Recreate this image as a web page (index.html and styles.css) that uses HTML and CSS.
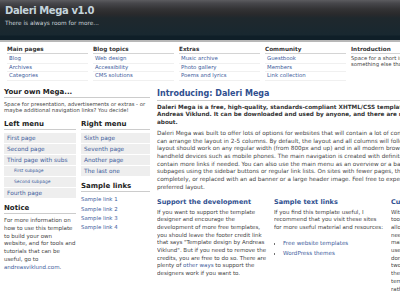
FILE: index.html
```html
<!DOCTYPE html>
<html lang="en">
<head>
    <meta charset="UTF-8">
    <title>Daleri Mega v1.0</title>
    <link rel="stylesheet" href="styles.css">
</head>
<body>
<div class="page">
    <header class="top">
        <h1 class="site-title">Daleri Mega v1.0</h1>
        <p class="site-slogan">There is always room for more...</p>
    </header>

    <nav class="menus">
        <dl class="menu">
            <dt>Main pages</dt>
            <dd><a href="#">Blog</a></dd>
            <dd><a href="#">Archives</a></dd>
            <dd><a href="#">Categories</a></dd>
        </dl>
        <dl class="menu">
            <dt>Blog topics</dt>
            <dd><a href="#">Web design</a></dd>
            <dd><a href="#">Accessibility</a></dd>
            <dd><a href="#">CMS solutions</a></dd>
        </dl>
        <dl class="menu">
            <dt>Extras</dt>
            <dd><a href="#">Music archive</a></dd>
            <dd><a href="#">Photo gallery</a></dd>
            <dd><a href="#">Poems and lyrics</a></dd>
        </dl>
        <dl class="menu">
            <dt>Community</dt>
            <dd><a href="#">Guestbook</a></dd>
            <dd><a href="#">Members</a></dd>
            <dd><a href="#">Link collection</a></dd>
        </dl>
        <div class="menu intro">
            <h3>Introduction</h3>
            <p>Space for a short introduction text, or<br>something else that you want to show.</p>
        </div>
    </nav>

    <div class="wrap">
        <aside class="side">
            <h2 class="side-title">Your own Mega...</h2>
            <p class="side-text">Space for presentation, advertisements or extras - or maybe additional navigation links? You decide!</p>

            <div class="side-cols">
                <div class="side-col">
                    <h2 class="side-title">Left menu</h2>
                    <ul class="buttons">
                        <li><a href="#">First page</a></li>
                        <li><a href="#">Second page</a></li>
                        <li><a href="#">Third page with subs</a></li>
                        <li class="sub"><a href="#">First subpage</a></li>
                        <li class="sub"><a href="#">Second subpage</a></li>
                        <li><a href="#">Fourth page</a></li>
                    </ul>
                    <h2 class="side-title">Notice</h2>
                    <p class="notice">For more information on how to use this template to build your own website, and for tools and tutorials that can be useful, go to <a href="#">andreasviklund.com</a>.</p>
                </div>
                <div class="side-col">
                    <h2 class="side-title">Right menu</h2>
                    <ul class="buttons">
                        <li><a href="#">Sixth page</a></li>
                        <li><a href="#">Seventh page</a></li>
                        <li><a href="#">Another page</a></li>
                        <li><a href="#">The last one</a></li>
                    </ul>
                    <h2 class="side-title">Sample links</h2>
                    <ul class="links">
                        <li><a href="#">Sample link 1</a></li>
                        <li><a href="#">Sample link 2</a></li>
                        <li><a href="#">Sample link 3</a></li>
                        <li><a href="#">Sample link 4</a></li>
                    </ul>
                </div>
            </div>
        </aside>

        <main class="main">
            <h2 class="main-title">Introducing: Daleri Mega</h2>
            <p class="lead">Daleri Mega is a free, high-quality, standards-compliant XHTML/CSS template by<br>
                Andreas Viklund. It can be downloaded and used by anyone, and there are no limitations to worry<br>
                about.</p>
            <p class="text">Daleri Mega was built to offer lots of options for websites that will contain a lot of content. You<br>
                can arrange the layout in 2-5 columns. By default, the layout and all columns will follow the width of the browser window. The<br>
                layout should work on any regular width (from 800px and up) and in all modern browsers, and it will also work well in<br>
                handheld devices such as mobile phones. The main navigation is created with definition lists, which makes it easy to<br>
                contain more links if needed. You can also use the main menu as an overview or a basic sitemap, and add links to<br>
                subpages using the sidebar buttons or regular link lists. On sites with fewer pages, the dropdown menu can be removed<br>
                completely, or replaced with an ad banner or a large header image. Feel free to experiment and find your own<br>
                preferred layout.</p>

            <div class="cols">
                <div class="col">
                    <h3 class="col-title">Support the development</h3>
                    <p class="text">If you want to support the template<br>
                        designer and encourage the<br>
                        development of more free templates,<br>
                        you should leave the footer credit link<br>
                        that says "Template design by Andreas<br>
                        Viklund". But if you need to remove the<br>
                        credits, you are free to do so. There are<br>
                        plenty of <a href="#">other ways</a> to support the<br>
                        designers work if you want to.</p>
                </div>
                <div class="col">
                    <h3 class="col-title">Sample text links</h3>
                    <p class="text">If you find this template useful, I<br>
                        recommend that you visit these sites<br>
                        for more useful material and resources:</p>
                    <ul class="bullets">
                        <li><a href="#">Free website templates</a></li>
                        <li><a href="#">WordPress themes</a></li>
                    </ul>
                </div>
                <div class="col">
                    <h3 class="col-title">Customize it</h3>
                    <p class="text">With five column layouts and<br>
                        tools for menus, the template<br>
                        allows you to build a site that<br>
                        needs no extra work. You can<br>
                        make changes to the colors and<br>
                        use your own header image.<br>
                        done with the layout, remove<br>
                        two columns and let the text<br>
                        the space. You can also use the<br>
                        template as a base for your own<br>
                        rather than starting over.</p>
                </div>
            </div>
        </main>
    </div>
</div>
</body>
</html>
```

FILE: styles.css
```css
* {
    margin: 0;
    padding: 0;
    box-sizing: border-box;
}

html, body {
    overflow: hidden;
}

body {
    background: #fff;
    font-family: "DejaVu Sans", Verdana, sans-serif;
    color: #444;
}

a {
    color: #3d5c9c;
    text-decoration: none;
}

.page {
    width: 620px;
}

/* header */
.top {
    height: 36px;
    padding: 4px 0 0 5px;
    background: linear-gradient(#5c5c60 0, #48484c 3px, #333335 9px, #2a2a2c 14px, #1f282d 18px, #182830 35px, #0f1f28 36px);
    border-bottom: 2px solid #b8b8b8;
    box-sizing: content-box;
}

.site-title {
    font-size: 10px;
    line-height: 14px;
    letter-spacing: -0.4px;
    font-weight: bold;
    color: #c4d4dc;
}

.site-slogan {
    margin-top: 2px;
    font-size: 5.8px;
    line-height: 7px;
    color: #c8d0d6;
}

/* top menus */
.menus {
    display: flex;
    gap: 5px;
    padding: 4px 0 0 7px;
}

.menu {
    width: 81px;
    flex: none;
}

.menu dt,
.intro h3 {
    font-size: 5.7px;
    line-height: 7px;
    font-weight: bold;
    color: #333;
    border-bottom: 1px solid #d4d4d4;
    margin-bottom: 1px;
}

.menu dd {
    font-size: 5.4px;
    line-height: 7.6px;
    padding-left: 2px;
    border-bottom: 1px solid #f0f0f0;
}

.intro {
    width: 200px;
}

.intro p {
    font-size: 5.3px;
    line-height: 6.3px;
    color: #444;
}

/* content */
.wrap {
    display: flex;
    gap: 5px;
    padding: 7px 0 0 4px;
}

.side {
    width: 146px;
    flex: none;
}

.side-title {
    font-size: 7px;
    line-height: 9px;
    font-weight: bold;
    color: #222;
    border-bottom: 1px solid #ccc;
    margin-bottom: 3px;
}

.side-text {
    font-size: 5.3px;
    line-height: 6.3px;
    margin-bottom: 7px;
}

.side-cols {
    display: flex;
    gap: 5px;
}

.side-col {
    width: 72px;
}

.side-col + .side-col {
    width: 69px;
}

.buttons {
    list-style: none;
    margin-bottom: 6px;
}

.buttons li {
    background: #eeeeee;
    margin-bottom: 1px;
    font-size: 5.8px;
    line-height: 10px;
    padding-left: 3px;
}

.buttons li.sub {
    font-size: 4.4px;
    padding-left: 10px;
}

.notice {
    font-size: 5.5px;
    line-height: 7.7px;
}

.links {
    list-style: none;
}

.links li {
    font-size: 5.4px;
    line-height: 9.3px;
}

.main {
    width: 460px;
    flex: none;
    padding-left: 2px;
}

.main-title {
    font-size: 8px;
    line-height: 12px;
    font-weight: bold;
    color: #2f4f8f;
    border-bottom: 1px solid #ccc;
    margin-bottom: 3px;
}

.text,
.lead {
    font-size: 5.7px;
    line-height: 7.7px;
    white-space: nowrap;
}

.lead {
    font-weight: bold;
    color: #333;
    margin-bottom: 3px;
}

.main > .text {
    margin-bottom: 6px;
}

.cols {
    display: flex;
}

.col {
    width: 117px;
    flex: none;
    overflow: hidden;
}

.col .text {
    font-size: 5.5px;
}

.col-title {
    font-size: 6.5px;
    line-height: 9px;
    font-weight: bold;
    color: #2f4f8f;
    margin-bottom: 2px;
}

.bullets {
    margin: 6px 0 0 9px;
    font-size: 5.6px;
    line-height: 10px;
}
```
